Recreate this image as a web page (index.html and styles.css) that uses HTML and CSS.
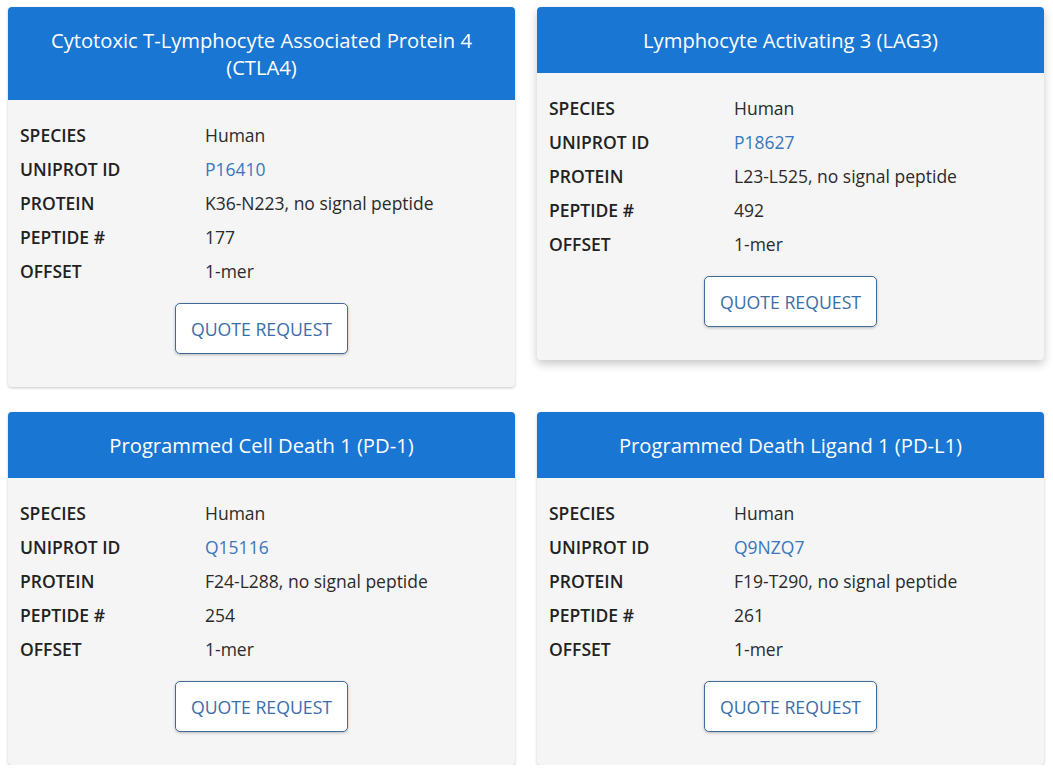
FILE: index.html
```html
<!DOCTYPE html>
<html>
<head>
<meta charset="utf-8">
<link rel="stylesheet" href="styles.css">
</head>
<body>
<div class="grid">
  <div class="card">
    <div class="card-head">Cytotoxic T-Lymphocyte Associated Protein 4 (CTLA4)</div>
    <div class="card-body">
      <div class="row"><span class="lab">SPECIES</span><span class="val">Human</span></div>
      <div class="row"><span class="lab">UNIPROT ID</span><a class="val link">P16410</a></div>
      <div class="row"><span class="lab">PROTEIN</span><span class="val">K36-N223, no signal peptide</span></div>
      <div class="row"><span class="lab">PEPTIDE #</span><span class="val">177</span></div>
      <div class="row"><span class="lab">OFFSET</span><span class="val">1-mer</span></div>
      <div class="btn-wrap"><button class="btn">QUOTE REQUEST</button></div>
    </div>
  </div>
  <div class="card raised">
    <div class="card-head">Lymphocyte Activating 3 (LAG3)</div>
    <div class="card-body">
      <div class="row"><span class="lab">SPECIES</span><span class="val">Human</span></div>
      <div class="row"><span class="lab">UNIPROT ID</span><a class="val link">P18627</a></div>
      <div class="row"><span class="lab">PROTEIN</span><span class="val">L23-L525, no signal peptide</span></div>
      <div class="row"><span class="lab">PEPTIDE #</span><span class="val">492</span></div>
      <div class="row"><span class="lab">OFFSET</span><span class="val">1-mer</span></div>
      <div class="btn-wrap"><button class="btn">QUOTE REQUEST</button></div>
    </div>
  </div>
  <div class="card">
    <div class="card-head">Programmed Cell Death 1 (PD-1)</div>
    <div class="card-body">
      <div class="row"><span class="lab">SPECIES</span><span class="val">Human</span></div>
      <div class="row"><span class="lab">UNIPROT ID</span><a class="val link">Q15116</a></div>
      <div class="row"><span class="lab">PROTEIN</span><span class="val">F24-L288, no signal peptide</span></div>
      <div class="row"><span class="lab">PEPTIDE #</span><span class="val">254</span></div>
      <div class="row"><span class="lab">OFFSET</span><span class="val">1-mer</span></div>
      <div class="btn-wrap"><button class="btn">QUOTE REQUEST</button></div>
    </div>
  </div>
  <div class="card">
    <div class="card-head">Programmed Death Ligand 1 (PD-L1)</div>
    <div class="card-body">
      <div class="row"><span class="lab">SPECIES</span><span class="val">Human</span></div>
      <div class="row"><span class="lab">UNIPROT ID</span><a class="val link">Q9NZQ7</a></div>
      <div class="row"><span class="lab">PROTEIN</span><span class="val">F19-T290, no signal peptide</span></div>
      <div class="row"><span class="lab">PEPTIDE #</span><span class="val">261</span></div>
      <div class="row"><span class="lab">OFFSET</span><span class="val">1-mer</span></div>
      <div class="btn-wrap"><button class="btn">QUOTE REQUEST</button></div>
    </div>
  </div>
</div>
</body>
</html>
```
FILE: styles.css
```css
html, body {
  margin: 0;
  padding: 0;
  background: #ffffff;
}
body {
  font-family: "Open Sans", "Noto Sans", sans-serif;
  color: #222;
}
.grid {
  display: grid;
  grid-template-columns: 507px 507px;
  column-gap: 22px;
  row-gap: 25px;
  align-items: start;
  padding: 7px 0 0 8px;
}
.card {
  background: #f5f5f5;
  border-radius: 4px;
  box-shadow: 0 1px 3px rgba(0,0,0,0.22);
  overflow: hidden;
}
.card.raised {
  box-shadow: 0 4px 10px rgba(0,0,0,0.22);
}
.card-head {
  background: #1976d2;
  color: #ffffff;
  font-size: 20.2px;
  font-weight: 500;
  line-height: 27px;
  text-align: center;
  padding: 20px 30px 19px;
}
.card-body {
  padding: 18px 12px 33px;
}
.row {
  display: flex;
  height: 34px;
  line-height: 34px;
  font-size: 17.5px;
}
.lab {
  width: 185px;
  font-weight: 600;
  color: #222;
}
.val {
  color: #2b2b2b;
}
.link {
  color: #3a76bd;
}
.btn-wrap {
  display: flex;
  justify-content: center;
  padding-top: 15px;
}
.btn {
  font-family: "Open Sans", "Noto Sans", sans-serif;
  font-size: 17.7px;
  color: #3a6ea8;
  background: #ffffff;
  border: 1px solid #3f6b98;
  border-radius: 5px;
  box-shadow: 0 1px 3px rgba(0,0,0,0.25);
  height: 51px;
  width: 173px;
  padding: 0;
}
```
